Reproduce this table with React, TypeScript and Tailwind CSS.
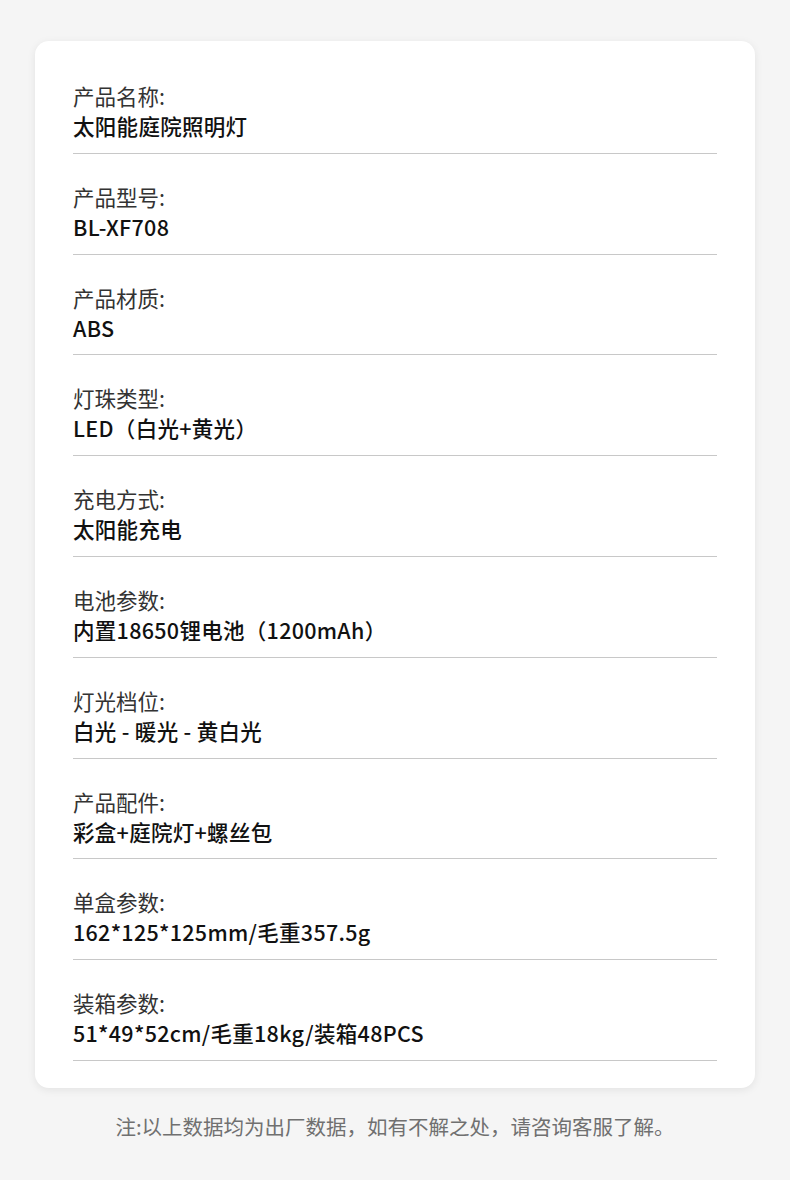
import React from "react";

const rows: [string, string][] = [
  ["产品名称:", "太阳能庭院照明灯"],
  ["产品型号:", "BL-XF708"],
  ["产品材质:", "ABS"],
  ["灯珠类型:", "LED（白光+黄光）"],
  ["充电方式:", "太阳能充电"],
  ["电池参数:", "内置18650锂电池（1200mAh）"],
  ["灯光档位:", "白光 - 暖光 - 黄白光"],
  ["产品配件:", "彩盒+庭院灯+螺丝包"],
  ["单盒参数:", "162*125*125mm/毛重357.5g"],
  ["装箱参数:", "51*49*52cm/毛重18kg/装箱48PCS"],
];

export default function App() {
  return (
    <div
      className="w-[790px] h-[1180px] bg-[#f5f5f5] pt-[41px] px-[35px]"
      style={{ fontFamily: '"Noto Sans CJK SC", "Noto Sans", sans-serif' }}
    >
      <div className="bg-white rounded-[14px] shadow-[0_2px_8px_rgba(0,0,0,0.08)] px-[38px] pt-[12px] pb-[27px]">
        {rows.map(([k, v]) => (
          <div key={k} className="border-b border-[#c8c8c8] pt-[28px] pb-[11.8px]">
            <div className="text-[21.5px] leading-[30px] text-[#333]">{k}</div>
            <div className="text-[21.5px] leading-[30px] font-medium text-[#111] tracking-[0.3px]">{v}</div>
          </div>
        ))}
      </div>
      <div className="text-center text-[20.5px] text-[#707070] mt-[23px] leading-[30px]">
        注:以上数据均为出厂数据，如有不解之处，请咨询客服了解。
      </div>
    </div>
  );
}
